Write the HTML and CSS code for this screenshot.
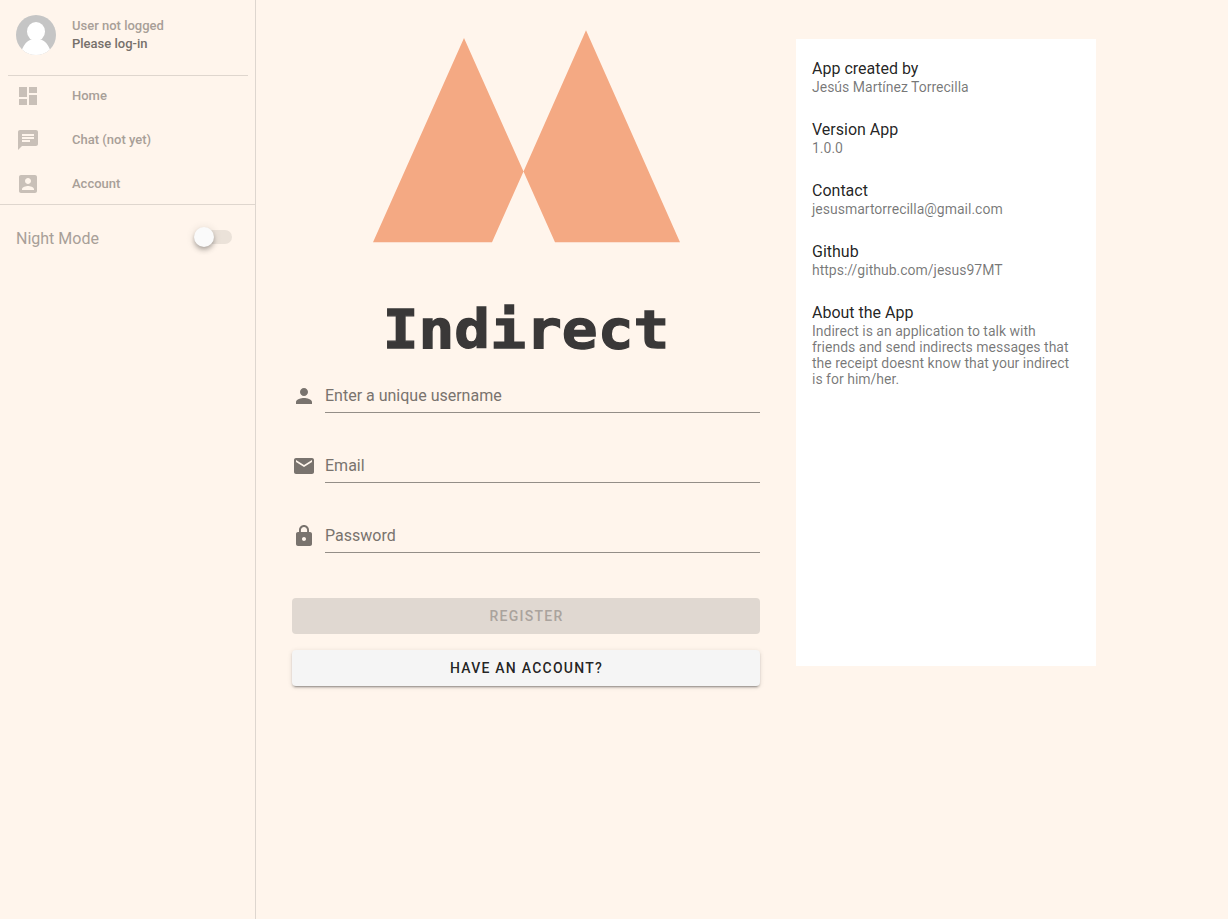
FILE: index.html
```html
<!DOCTYPE html>
<html lang="en">
<head>
<meta charset="utf-8">
<title>Indirect</title>
<link rel="stylesheet" href="styles.css">
</head>
<body>
<div class="app">
  <aside class="sidebar">
    <div class="user">
      <svg class="avatar" viewBox="0 0 40 40">
        <defs><clipPath id="round"><circle cx="20" cy="20" r="20"/></clipPath></defs>
        <g clip-path="url(#round)">
          <rect width="40" height="40" fill="#c5c5c5"/>
          <ellipse cx="20" cy="16.500" rx="9" ry="9.500" fill="#fff"/>
          <path d="M5.500 36C8 29 11 26 15 24.500H25C29 26 32 29 34.500 36V40H5.500Z" fill="#fff"/>
        </g>
      </svg>
      <div class="user-text">
        <div>User not logged</div>
        <div class="login">Please log-in</div>
      </div>
    </div>
    <nav class="nav">
      <a class="nav-item"><svg class="icon" viewBox="0 0 24 24"><path d="M3 13h8V3H3v10zm0 8h8v-6H3v6zm10 0h8V11h-8v10zm0-18v6h8V3h-8z"/></svg><span>Home</span></a>
      <a class="nav-item"><svg class="icon" viewBox="0 0 24 24"><path d="M20 2H4c-1.100 0-1.990.9-1.990 2L2 22l4-4h14c1.100 0 2-.9 2-2V4c0-1.100-.9-2-2-2zM6 9h12v2H6V9zm8 5H6v-2h8v2zm4-6H6V6h12v2z"/></svg><span>Chat (not yet)</span></a>
      <a class="nav-item"><svg class="icon" viewBox="0 0 24 24"><path d="M3 5v14c0 1.100.89 2 2 2h14c1.100 0 2-.9 2-2V5c0-1.100-.9-2-2-2H5c-1.110 0-2 .9-2 2zm12 4c0 1.660-1.340 3-3 3s-3-1.340-3-3 1.340-3 3-3 3 1.340 3 3zm-9 8c0-2 4-3.100 6-3.100s6 1.100 6 3.100v1H6v-1z"/></svg><span>Account</span></a>
    </nav>
    <div class="night">
      <span>Night Mode</span>
      <div class="switch"><div class="thumb"></div></div>
    </div>
  </aside>
  <main class="main">
    <section class="register">
      <svg class="logo" viewBox="0 0 308 214"><path d="M91 8 150.500 141.500 119 212.300H0ZM213 0.300 307 212.300H182L150.500 141.500Z"/></svg>
      <h1 class="title"><span>Indirect</span></h1>
      <form class="form">
        <label class="field"><svg class="icon" viewBox="0 0 24 24"><path d="M12 12c2.210 0 4-1.790 4-4s-1.790-4-4-4-4 1.790-4 4 1.790 4 4 4zm0 2c-2.670 0-8 1.340-8 4v2h16v-2c0-2.660-5.330-4-8-4z"/></svg><span class="input">Enter a unique username</span></label>
        <label class="field"><svg class="icon" viewBox="0 0 24 24"><path d="M20 4H4c-1.100 0-1.990.9-1.990 2L2 18c0 1.100.9 2 2 2h16c1.100 0 2-.9 2-2V6c0-1.100-.9-2-2-2zm0 4l-8 5-8-5V6l8 5 8-5v2z"/></svg><span class="input">Email</span></label>
        <label class="field"><svg class="icon" viewBox="0 0 24 24"><path d="M18 8h-1V6c0-2.760-2.240-5-5-5S7 3.240 7 6v2H6c-1.100 0-2 .9-2 2v10c0 1.100.9 2 2 2h12c1.100 0 2-.9 2-2V10c0-1.100-.9-2-2-2zm-6 9c-1.100 0-2-.9-2-2s.9-2 2-2 2 .9 2 2-.9 2-2 2zm3.100-9H8.900V6c0-1.710 1.390-3.100 3.100-3.100 1.710 0 3.100 1.390 3.100 3.100v2z"/></svg><span class="input">Password</span></label>
        <button class="btn btn-disabled" type="button" disabled>REGISTER</button>
        <button class="btn btn-raised" type="button">HAVE AN ACCOUNT?</button>
      </form>
    </section>
    <section class="info">
      <div class="entry"><h2>App created by</h2><p>Jesús Martínez Torrecilla</p></div>
      <div class="entry"><h2>Version App</h2><p>1.0.0</p></div>
      <div class="entry"><h2>Contact</h2><p>jesusmartorrecilla@gmail.com</p></div>
      <div class="entry"><h2>Github</h2><p>https://github.com/jesus97MT</p></div>
      <div class="entry"><h2>About the App</h2><p>Indirect is an application to talk with friends and send indirects messages that the receipt doesnt know that your indirect is for him/her.</p></div>
    </section>
  </main>
</div>
</body>
</html>
```
FILE: styles.css
```css
* { box-sizing: border-box; }
body {
  margin: 0;
  background: #fff5ec;
  color: rgba(0, 0, 0, 0.87);
  font-family: Roboto, sans-serif;
  overflow: hidden;
}
.app { display: flex; height: 100vh; }
.icon { width: 24px; height: 24px; fill: currentColor; flex: none; }

.sidebar {
  width: 256px;
  flex: none;
  border-right: 1px solid #ded6cf;
  color: #a89f98;
}
.user {
  display: flex;
  height: 76px;
  margin: 0 7px 0 8px;
  padding: 15px 8px 0;
  border-bottom: 1px solid #dfd6ce;
}
.avatar { width: 40px; height: 40px; margin-right: 16px; }
.user-text { padding-top: 2px; font-size: 13px; font-weight: 500; line-height: 18px; }
.login { color: #76706b; }
.nav {
  display: flex;
  flex-direction: column;
  gap: 4px;
  height: 129px;
  border-bottom: 1px solid #dfd6ce;
}
.nav-item {
  display: flex;
  flex: none;
  align-items: center;
  gap: 32px;
  height: 40px;
  padding-left: 16px;
  font-size: 13px;
  font-weight: 500;
  line-height: 16px;
}
.nav-item .icon { color: #c9c0b8; }
.night {
  display: flex;
  justify-content: space-between;
  align-items: flex-start;
  padding: 24px 23px 0 16px;
  font-size: 16px;
  line-height: 20px;
}
.switch {
  width: 36px;
  height: 14px;
  margin-top: 1px;
  border-radius: 7px;
  background: #ebe2d9;
}
.thumb {
  width: 20px;
  height: 20px;
  margin: -3px 0 0 -2px;
  border-radius: 50%;
  background: #fafafa;
  box-shadow: 0 2px 4px -1px rgba(0,0,0,.2), 0 4px 5px rgba(0,0,0,.14), 0 1px 10px rgba(0,0,0,.12);
}

.main { display: flex; align-items: flex-start; gap: 36px; padding-left: 36px; }
.register {
  display: flex;
  flex-direction: column;
  align-items: center;
  width: 468px;
  padding-top: 30px;
}
.logo { width: 308px; height: 214px; margin-left: 2px; fill: #f4a983; }
.title {
  height: 70px;
  margin: 51px 0 0;
  color: #3a3838;
  font: bold 59.5px/70px "DejaVu Sans Mono", monospace;
  -webkit-text-stroke: 1.4px #3a3838;
}
.title span { display: inline-block; transform: scaleY(0.9); }
.form { width: 100%; display: flex; flex-direction: column; padding-top: 16px; }
.field {
  display: flex;
  gap: 9px;
  height: 32px;
  margin-bottom: 38px;
  color: #79736e;
}
.field .icon { margin-top: 3px; }
.input {
  flex: 1;
  padding-top: 5px;
  border-bottom: 1px solid #948e88;
  font-size: 16px;
  line-height: 20px;
}
.btn {
  height: 36px;
  padding: 0 0 0 1px;
  border: 0;
  border-radius: 4px;
  font: 500 14px/16px Roboto, sans-serif;
  letter-spacing: 1.25px;
}
.btn-disabled { margin-top: 7px; background: #e0d8d1; color: #aaa39d; }
.btn-raised {
  margin-top: 16px;
  background: #f5f5f5;
  color: rgba(0, 0, 0, 0.87);
  box-shadow: 0 3px 1px -2px rgba(0,0,0,.2), 0 2px 2px rgba(0,0,0,.14), 0 1px 5px rgba(0,0,0,.12);
}

.info {
  display: flex;
  flex-direction: column;
  gap: 25px;
  width: 300px;
  height: 627px;
  margin-top: 39px;
  padding: 20px 16px;
  background: #fff;
}
.entry h2 { margin: 0; font-size: 16px; font-weight: 400; line-height: 20px; }
.entry p { margin: 0; font-size: 14px; line-height: 16px; color: rgba(0, 0, 0, 0.54); }
```
